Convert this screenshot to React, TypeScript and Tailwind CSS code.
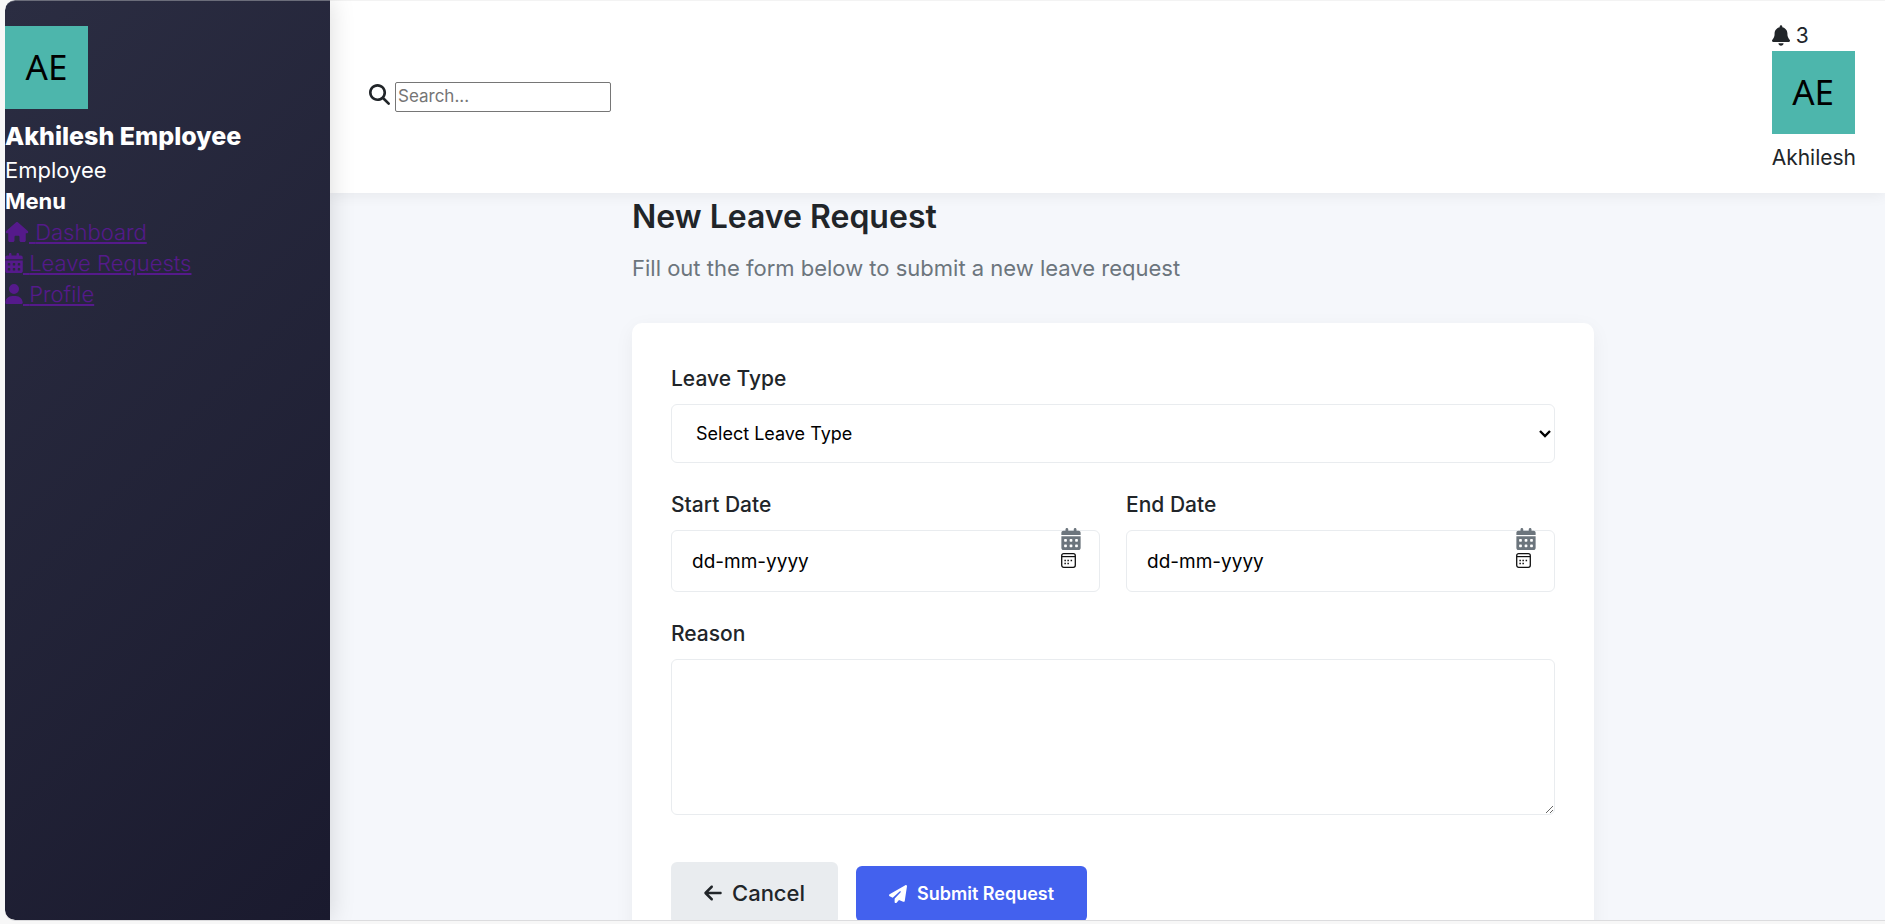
import type { ReactNode } from "react";
import {
  FaArrowLeft,
  FaBell,
  FaCalendarDays,
  FaHouse,
  FaMagnifyingGlass,
  FaPaperPlane,
  FaUser,
} from "react-icons/fa6";

function Avatar() {
  return (
    <div
      role="img"
      aria-label="Akhilesh Employee"
      className="flex size-[83px] items-center justify-center bg-[#4db6ac] pb-0.5 font-['Noto_Sans',sans-serif] text-[35px] text-black"
    >
      AE
    </div>
  );
}

function MenuLink({ icon, children }: { icon: ReactNode; children: string }) {
  return (
    <li>
      <a href="#" className="font-light text-[#551a8b] underline underline-offset-2">
        {icon} {children}
      </a>
    </li>
  );
}

function Sidebar() {
  return (
    <aside className="z-20 w-[325px] shrink-0 rounded-l-[10px] border-t border-[#6b6d7a] bg-[linear-gradient(135deg,#2b2d42,#1a1a2e)] pt-[25px] text-white shadow-[0_0_26px_rgba(0,0,0,0.15)]">
      <Avatar />
      <h3 className="mt-[9px] text-[25px] leading-[37px] font-extrabold">Akhilesh Employee</h3>
      <p>Employee</p>
      <h4 className="font-bold">Menu</h4>
      <nav>
        <ul>
          <MenuLink icon={<FaHouse className="inline h-5 w-6 align-[-2px]" />}>Dashboard</MenuLink>
          <MenuLink icon={<FaCalendarDays className="inline h-5 w-[18px] align-[-2px]" />}>
            Leave Requests
          </MenuLink>
          <MenuLink icon={<FaUser className="inline h-5 w-[18px] align-[-2px]" />}>Profile</MenuLink>
        </ul>
      </nav>
    </aside>
  );
}

function Header() {
  return (
    <header className="z-10 flex items-center justify-between border-t border-[#f3f3f3] bg-white pt-[19px] pr-[29px] pb-5 pl-[39px] shadow-[0_3px_13px_rgba(0,0,0,0.06)]">
      <div className="flex items-center gap-[5px]">
        <FaMagnifyingGlass className="mb-1 size-[21px]" />
        <input
          type="text"
          aria-label="Search"
          placeholder="Search..."
          className="h-[30px] w-[216px] rounded-xs border border-[#767676] px-0.5 text-[17px] placeholder:text-[#757575]"
        />
      </div>
      <div className="text-[21px] leading-[31px]">
        <div className="flex items-center gap-1.5">
          <FaBell className="h-[21px] w-[18px]" />
          <span>3</span>
        </div>
        <Avatar />
        <div className="mt-2">Akhilesh</div>
      </div>
    </header>
  );
}

const fieldClass = "block w-full rounded-md border border-[#e9ecef] bg-white text-black";
const labelClass = "mb-2.5 block pt-px text-[21px] leading-[31px] font-medium";

function DateField({ id, label }: { id: string; label: string }) {
  return (
    <div>
      <label htmlFor={id} className={labelClass}>
        {label}
      </label>
      <div className="relative">
        <input
          id={id}
          type="text"
          placeholder="dd-mm-yyyy"
          className={`${fieldClass} h-[62px] px-5 text-[19px] placeholder:text-black`}
        />
        <FaCalendarDays className="absolute -top-0.5 right-[19px] h-[22px] w-5 text-[#6c757d]" />
        <svg
          viewBox="0 0 15 15"
          fill="none"
          stroke="#111"
          aria-hidden="true"
          className="absolute top-[23px] right-6 size-[15px]"
        >
          <rect x="0.7" y="0.7" width="13.6" height="13.6" rx="2" strokeWidth="1.3" />
          <path d="M1 3.6h13" strokeWidth="1.2" />
          <path d="M3.4 7.5h1.5M6.4 7.5h1.5M9.6 7.5h1.5M3.4 10.6h1.5M6.4 10.6h1.5" strokeWidth="1.5" />
        </svg>
      </div>
    </div>
  );
}

function LeaveForm() {
  return (
    <form className="rounded-[10px] bg-white px-[39px] pt-[39px] pb-10 shadow-[0_5px_20px_rgba(0,0,0,0.05)]">
      <label htmlFor="leave-type" className={labelClass}>
        Leave Type
      </label>
      <div className="relative">
        <select id="leave-type" className={`${fieldClass} h-[59px] appearance-none px-6 text-lg`}>
          <option>Select Leave Type</option>
        </select>
        <svg
          viewBox="0 0 12 8"
          fill="none"
          stroke="#000"
          strokeWidth="2.4"
          aria-hidden="true"
          className="pointer-events-none absolute top-[26px] right-1 h-2 w-3"
        >
          <path d="M1 1l5 5 5-5" />
        </svg>
      </div>
      <div className="mt-[25px] grid grid-cols-2 gap-[26px]">
        <DateField id="start-date" label="Start Date" />
        <DateField id="end-date" label="End Date" />
      </div>
      <label htmlFor="reason" className={`${labelClass} mt-[25px]`}>
        Reason
      </label>
      <textarea id="reason" className={`${fieldClass} h-[156px] resize-y px-5 py-4 text-lg`} />
      <div className="mt-[47px] flex items-baseline gap-[18px]">
        <button
          type="button"
          className="flex h-[62px] items-center gap-2.5 rounded-md bg-[#e9ecef] px-[33px] font-medium"
        >
          <FaArrowLeft className="h-5 w-[18px]" />
          Cancel
        </button>
        <button
          type="submit"
          className="flex h-14 items-center gap-2.5 rounded-md bg-[#4361ee] px-[33px] text-lg font-semibold text-white"
        >
          <FaPaperPlane className="size-[18px]" />
          Submit Request
        </button>
      </div>
    </form>
  );
}

export default function App() {
  return (
    <div className="h-screen bg-[#f7f7f7] pb-[3px] pl-[5px] font-['Inter',sans-serif] text-[22px] leading-[31px] text-[#212529]">
      <div className="flex h-full overflow-hidden rounded-l-[10px] border-b border-[#dcdcde] bg-[#f5f7fb]">
        <Sidebar />
        <div className="flex min-w-0 grow flex-col">
          <Header />
          <main className="pl-[11px]">
            <div className="mx-auto max-w-[962px]">
              <h1 className="mb-[13px] text-[32px] leading-[47px] font-semibold">New Leave Request</h1>
              <p className="mb-[39px] text-[#6c757d]">
                Fill out the form below to submit a new leave request
              </p>
              <LeaveForm />
            </div>
          </main>
        </div>
      </div>
    </div>
  );
}
